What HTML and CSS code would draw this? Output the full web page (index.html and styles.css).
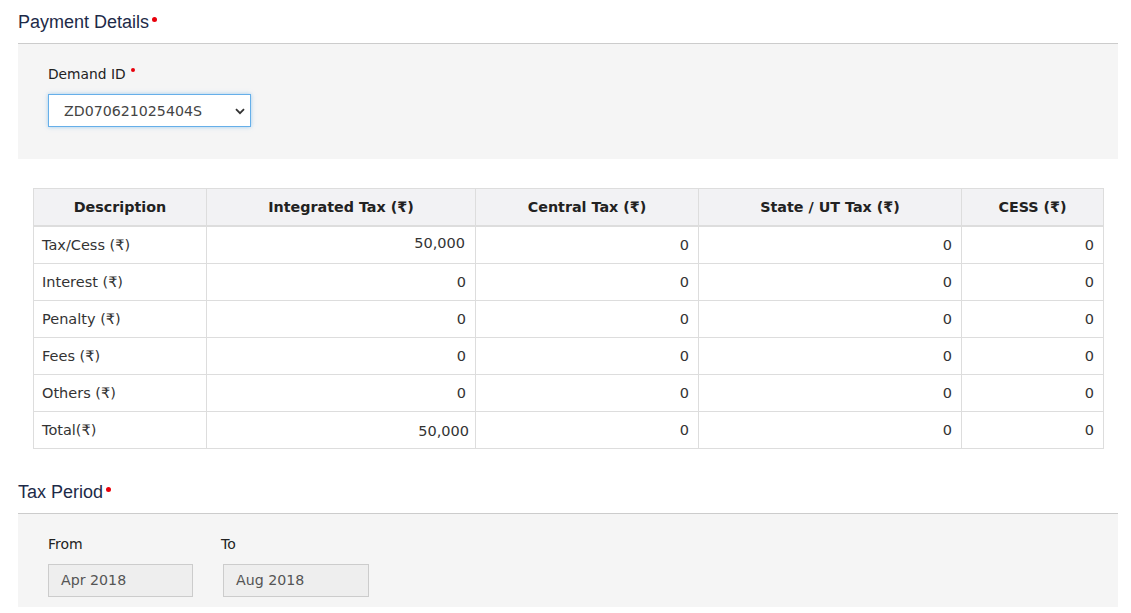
FILE: index.html
```html
<!DOCTYPE html>
<html>
<head>
<meta charset="utf-8">
<link rel="stylesheet" href="styles.css">
</head>
<body>
<div class="page">
  <h3 class="section-title">Payment Details<span class="req"></span></h3>
  <div class="panel panel-demand">
    <label class="field-label demand-label">Demand ID<span class="req small"></span></label>
    <div class="select">
      <span class="select-value">ZD070621025404S</span>
      <svg class="chev" width="10" height="7" viewBox="0 0 10 7"><path d="M1 1.2 L5 5.2 L9 1.2" fill="none" stroke="#333" stroke-width="1.8"/></svg>
    </div>
  </div>

  <div class="table-wrap">
    <table class="tax-table">
      <colgroup>
        <col class="c1"><col class="c2"><col class="c3"><col class="c4"><col class="c5">
      </colgroup>
      <thead>
        <tr>
          <th>Description</th>
          <th>Integrated Tax (₹)</th>
          <th>Central Tax (₹)</th>
          <th>State / UT Tax (₹)</th>
          <th>CESS (₹)</th>
        </tr>
      </thead>
      <tbody>
        <tr><td>Tax/Cess (₹)</td><td class="num up">50,000</td><td class="num">0</td><td class="num">0</td><td class="num">0</td></tr>
        <tr><td>Interest (₹)</td><td class="num">0</td><td class="num">0</td><td class="num">0</td><td class="num">0</td></tr>
        <tr><td>Penalty (₹)</td><td class="num">0</td><td class="num">0</td><td class="num">0</td><td class="num">0</td></tr>
        <tr><td>Fees (₹)</td><td class="num">0</td><td class="num">0</td><td class="num">0</td><td class="num">0</td></tr>
        <tr><td>Others (₹)</td><td class="num">0</td><td class="num">0</td><td class="num">0</td><td class="num">0</td></tr>
        <tr><td>Total(₹)</td><td class="num total">50,000</td><td class="num">0</td><td class="num">0</td><td class="num">0</td></tr>
      </tbody>
    </table>
  </div>

  <h3 class="section-title tax-period">Tax Period<span class="req"></span></h3>
  <div class="panel panel-period">
    <div class="period-field">
      <label class="field-label">From</label>
      <div class="ro-input from">Apr 2018</div>
    </div>
    <div class="period-field">
      <label class="field-label">To</label>
      <div class="ro-input to">Aug 2018</div>
    </div>
  </div>
</div>
</body>
</html>
```

FILE: styles.css
```css
html, body {
  margin: 0;
  padding: 0;
  background: #ffffff;
}
body {
  font-family: "DejaVu Sans", Verdana, sans-serif;
  font-size: 14px;
  color: #333333;
}
.page {
  padding: 0 13px 0 18px;
  width: 1100px;
}
.section-title {
  margin: 0;
  padding: 12px 0 10px 0;
  font-family: "Liberation Sans", Arial, sans-serif;
  font-weight: normal;
  font-size: 18px;
  line-height: 21px;
  color: #1d2a48;
  border-bottom: 1px solid #cccccc;
  display: block;
}
.req {
  display: inline-block;
  width: 5px;
  height: 5px;
  border-radius: 50%;
  background: #e8000b;
  margin-left: 3px;
  vertical-align: top;
  margin-top: 5px;
}
.req.small {
  width: 4px;
  height: 4px;
  margin-top: 3px;
  margin-left: 5px;
}
.panel {
  background: #f5f5f5;
  padding: 0 30px;
}
.panel-demand {
  height: 115px;
  padding-top: 21px;
  box-sizing: border-box;
}
.field-label {
  display: block;
  font-size: 14px;
  line-height: 18px;
  color: #222222;
  margin-bottom: 11px;
}
.demand-label {
  font-size: 13.8px;
}
.select {
  width: 203px;
  height: 33px;
  box-sizing: border-box;
  border: 1px solid #66afe9;
  background: #ffffff;
  box-shadow: 0 0 4px rgba(102, 175, 233, 0.6);
  display: flex;
  align-items: center;
  justify-content: space-between;
  padding: 0 5px 0 15px;
}
.select-value {
  color: #444444;
  font-size: 14.2px;
}
.chev {
  margin-top: 1px;
}
.table-wrap {
  padding: 29px 16px 0 15px;
}
.tax-table {
  width: 1070px;
  border-collapse: collapse;
  table-layout: fixed;
}
.c1 { width: 173px; }
.c2 { width: 269px; }
.c3 { width: 223px; }
.c4 { width: 263px; }
.c5 { width: 142px; }
.tax-table th {
  background: #f2f2f4;
  font-weight: bold;
  font-size: 14.3px;
  color: #222222;
  height: 36px;
  border: 1px solid #dddddd;
  border-bottom: 2px solid #dddddd;
  text-align: center;
  padding: 0 6px;
}
.tax-table td {
  border: 1px solid #dddddd;
  height: 37px;
  box-sizing: border-box;
  padding: 0 8px;
  font-size: 14.5px;
  color: #333333;
}
.tax-table td.num {
  text-align: right;
  padding-right: 9px;
}
.tax-table td.up {
  padding-bottom: 3px;
  padding-right: 10px;
}
.tax-table td.total {
  padding-right: 6px;
  padding-top: 2px;
}
.tax-period {
  margin-top: 25px;
  padding-top: 8px;
}
.panel-period {
  height: 93px;
  box-sizing: border-box;
  padding-top: 21px;
  display: flex;
  gap: 28px;
}
.period-field .field-label {
  margin-bottom: 11px;
}
.ro-input {
  height: 33px;
  box-sizing: border-box;
  border: 1px solid #cccccc;
  background: #eeeeee;
  color: #555555;
  font-size: 14.2px;
  line-height: 31px;
  padding-left: 12px;
}
.ro-input.from { width: 145px; }
.ro-input.to { width: 146px; margin-left: 2px; }
```
